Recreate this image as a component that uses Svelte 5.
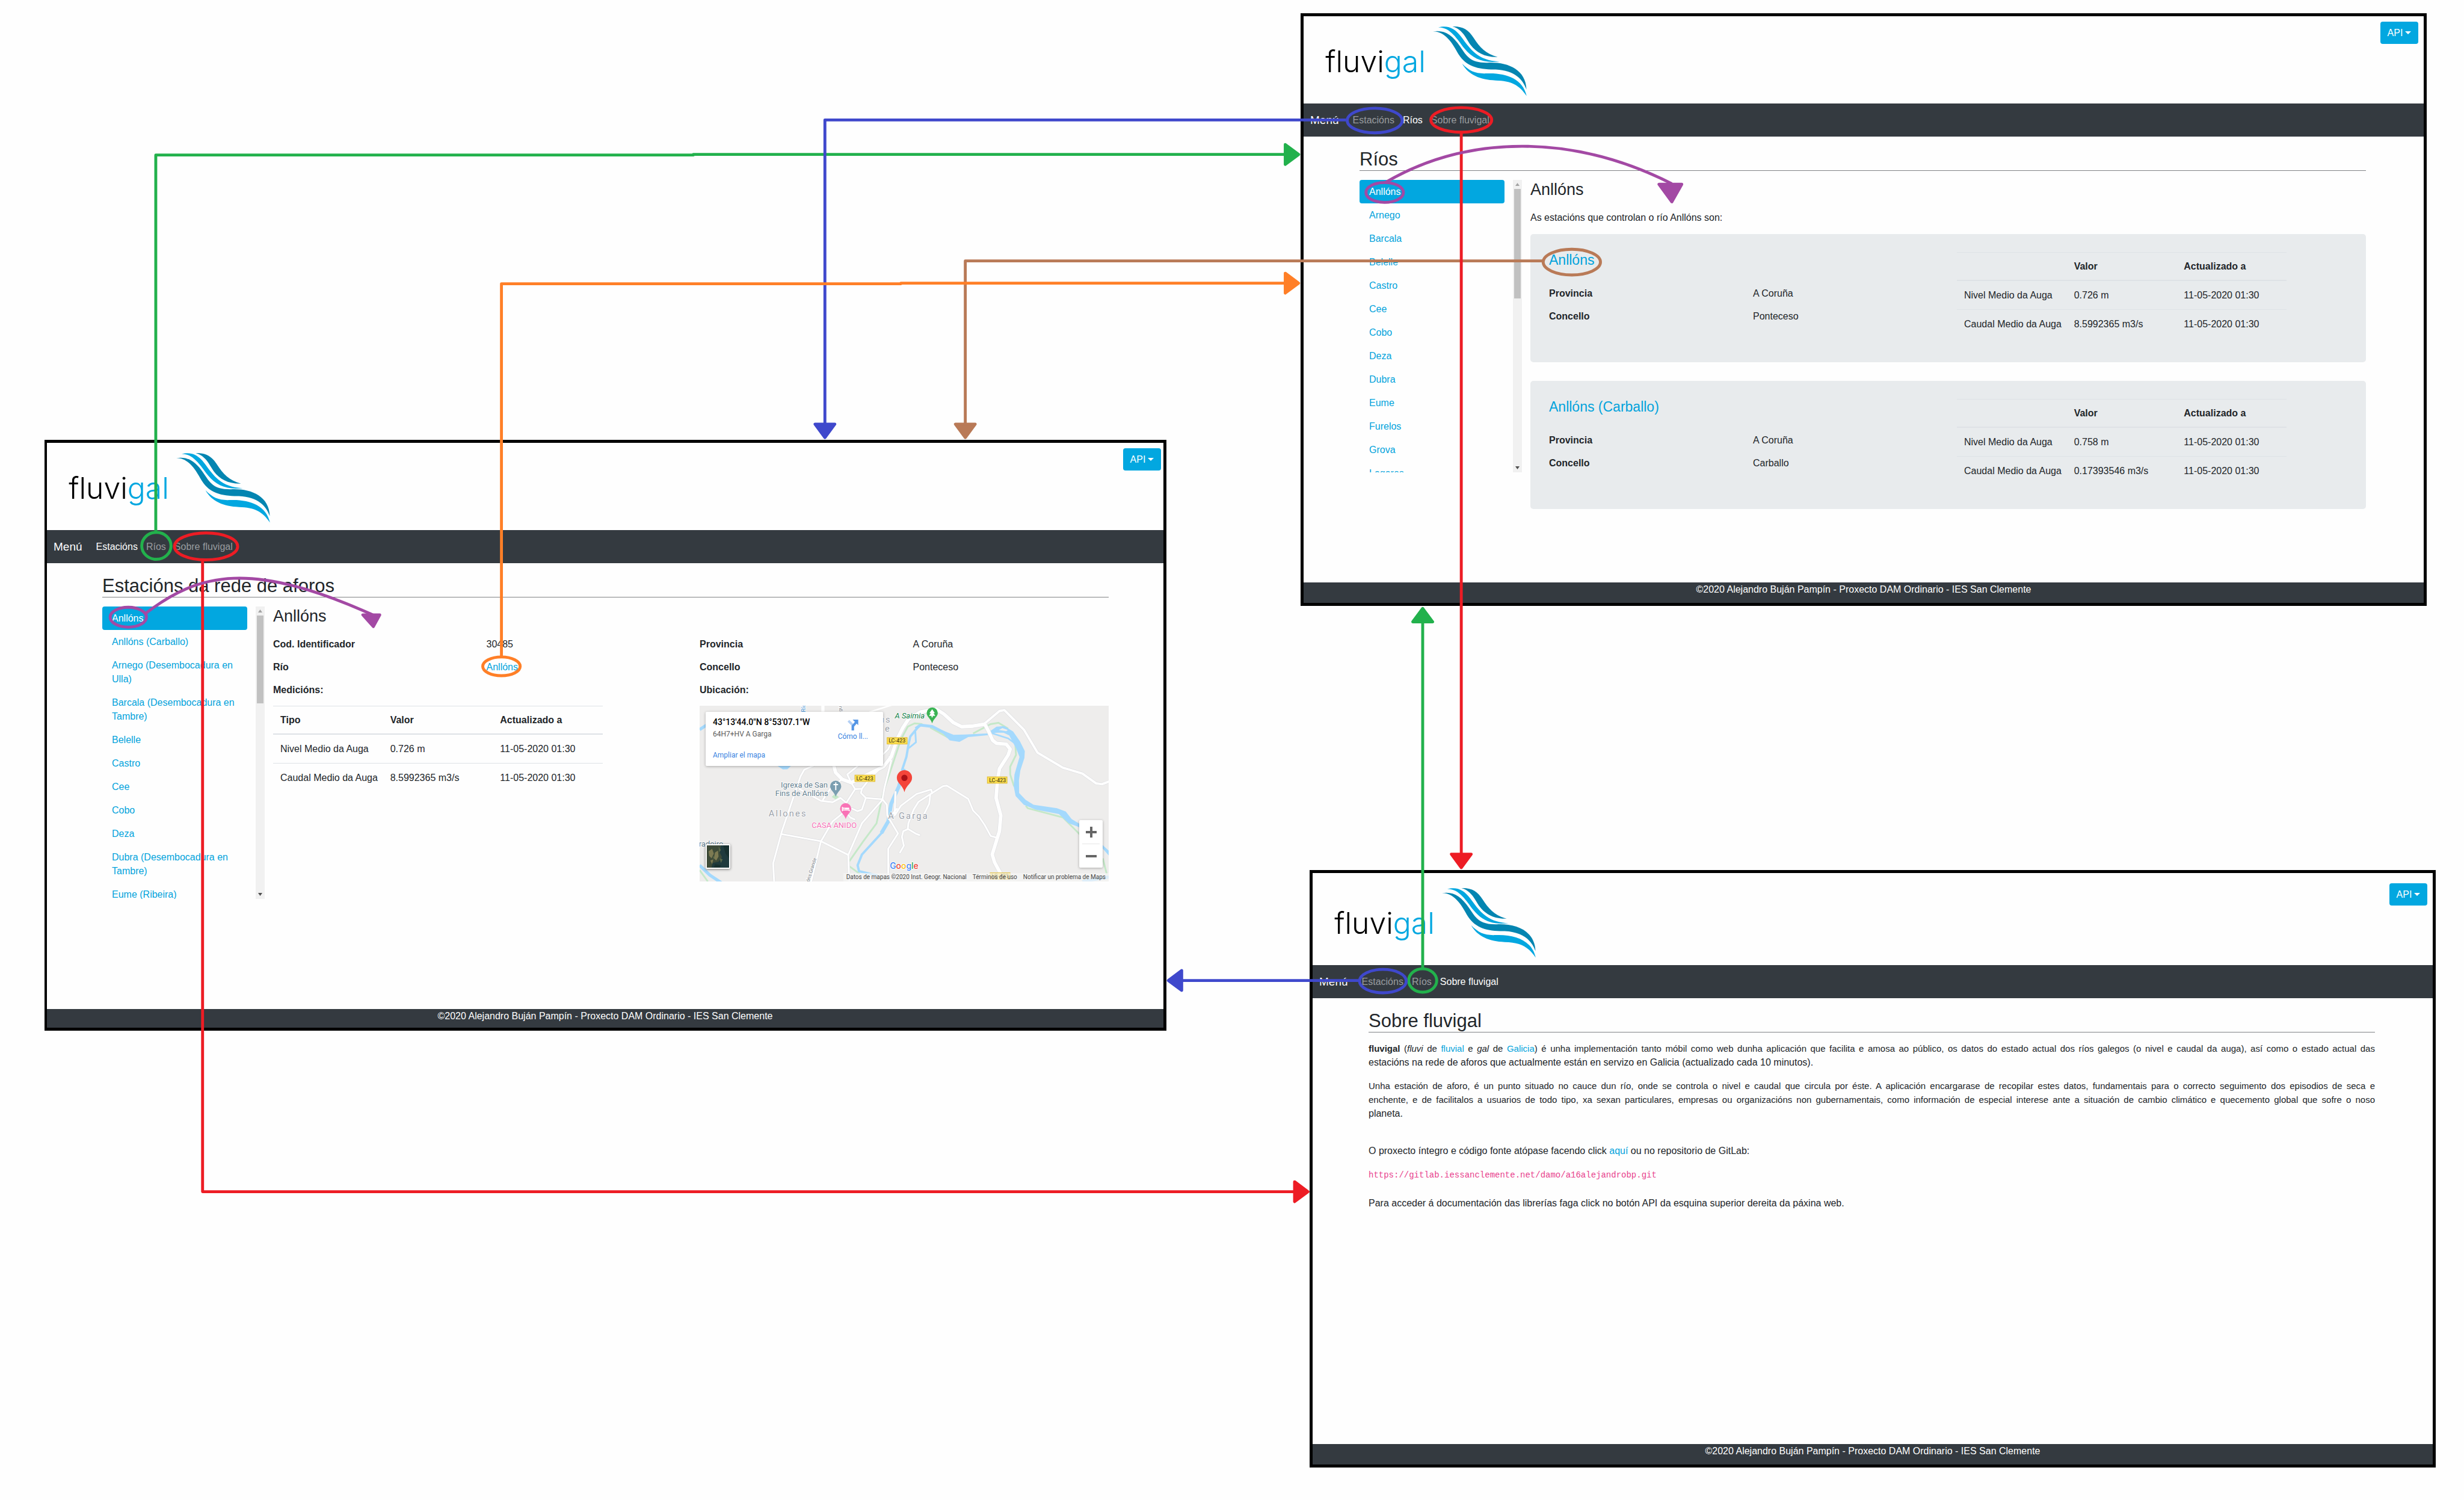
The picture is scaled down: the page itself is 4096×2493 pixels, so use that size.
<script>
  const sections = [
    { id: 'estacions', label: 'Estacións' },
    { id: 'rios', label: 'Ríos' },
    { id: 'sobre', label: 'Sobre fluvigal' }
  ];

  const stations = [
    'Anllóns', 'Anllóns (Carballo)', 'Arnego (Desembocadura en Ulla)',
    'Barcala (Desembocadura en Tambre)', 'Belelle', 'Castro', 'Cee', 'Cobo', 'Deza',
    'Dubra (Desembocadura en Tambre)', 'Eume (Ribeira)'
  ];

  const rivers = [
    'Anllóns', 'Arnego', 'Barcala', 'Belelle', 'Castro', 'Cee', 'Cobo', 'Deza',
    'Dubra', 'Eume', 'Furelos', 'Grova', 'Lagares'
  ];

  const date = '11-05-2020 01:30';

  const riverStations = [
    { name: 'Anllóns', concello: 'Ponteceso', level: '0.726 m', flow: '8.5992365 m3/s' },
    { name: 'Anllóns (Carballo)', concello: 'Carballo', level: '0.758 m', flow: '0.17393546 m3/s' }
  ];

  const minorRoads = [
    'M600 325 L555 345 L535 380 L440 660 L395 825 L400 918',
    'M435 675 L640 712 L780 782 L785 918',
    'M590 918 L640 712 L700 610 L765 558 L790 590 L812 600',
    'M780 782 L850 620 L955 500 L965 440 L1000 300 L990 280',
    'M530 445 L640 505 L700 512 L740 490 L770 515 L815 445 L795 412 L775 370 L830 325',
    'M650 500 L690 440 L740 400',
    'M815 445 L850 443 L895 385 L985 300',
    'M850 443 L845 465 L870 490 L955 497',
    'M870 490 L850 550 L828 558 L800 545',
    'M955 497 L978 525 L980 580 L1035 672 L985 750 L985 918',
    'M1022 460 L1018 580 L1050 530 L1130 470 L1205 447 L1210 465',
    'M1000 580 L1030 545',
    'M1210 465 L1265 430 L1285 427 L1395 495 L1420 555 L1450 585 L1480 630 L1510 685 L1535 692',
    'M1210 465 L1140 510 L1115 550 L1088 620 L1085 650 L1062 660 L1055 690 L1065 735 L1045 770',
    'M1085 648 L1130 675 L1145 680',
    'M1200 475 L1195 520 L1170 570',
    'M960 265 L985 240 L1000 205'
  ];
  const mainRoad =
    'M705 320 L715 360 L750 395 L795 412 L880 370 L960 330 L1000 280 L1030 190 L1060 130 L1090 85 L1150 50 L1230 35 L1270 60 L1320 105 L1360 125 L1420 122 L1480 112 L1500 150 L1520 195 L1540 210 L1590 215 L1610 240 L1600 270 L1555 340 L1545 400 L1538 490 L1562 580 L1555 660 L1518 780 L1530 820 L1560 875';
  const eastRoad =
    'M1480 108 L1555 45 L1580 40 L1680 140 L1750 258 L1880 335 L1980 365 L2050 415 L2080 420 L2120 405';

  // Arrow heads: tip position and heading in degrees (0 points down).
  const heads = [
    { x: 2225, y: 264, turn: -90, color: '#22b14c' },
    { x: 2432, y: 1035, turn: 180, color: '#22b14c' },
    { x: 1410, y: 753, turn: 0, color: '#3f48cc' },
    { x: 1992, y: 1676, turn: 90, color: '#3f48cc' },
    { x: 1650, y: 753, turn: 0, color: '#b97a57' },
    { x: 2225, y: 484, turn: -90, color: '#ff7f27' },
    { x: 2241, y: 2037, turn: -90, color: '#ed1c24' },
    { x: 2498, y: 1488, turn: 0, color: '#ed1c24' }
  ];
</script>

{#snippet topBar(active)}
  <header class="brand">
    <svg class="logo" viewBox="-81 -6 1161 444" role="img" aria-label="fluvigal">
      <text x="31" y="281">fluvi<tspan class="logo-accent">gal</tspan></text>
      <path class="deep" d="M683 46 C735 44 765 62 792 105 C822 152 855 188 915 203 C850 205 806 180 777 142 C752 108 738 62 683 46Z" />
      <path class="light" d="M610 51 C660 38 695 55 727 98 C775 162 812 222 925 226 C845 236 790 215 745 160 C707 112 672 49 610 51Z" />
      <path class="deep" d="M582 72 C640 62 680 86 722 148 C757 200 775 234 865 232 C965 228 1060 265 1063 370 C1045 318 1003 272 905 267 C815 268 755 252 715 190 C686 140 650 70 582 72Z" />
      <path class="light" d="M733 237 C772 278 805 290 862 287 C960 284 1045 315 1064 403 C1025 345 985 325 905 323 C825 320 765 295 733 237Z" />
    </svg>
    <button type="button" class="api">API<span class="caret"></span></button>
  </header>
  <nav class="navbar">
    <span class="menu">Menú</span>
    {#each sections as s}
      <a href="#{s.id}" class:active={s.id === active}>{s.label}</a>
    {/each}
  </nav>
{/snippet}

{#snippet sideList(items, thumb)}
  <div class="side">
    <ul class="list">
      {#each items as item, i}
        <li><a href="#item-{i}" class:selected={i === 0}>{item}</a></li>
      {/each}
    </ul>
    <div class="scroll" aria-hidden="true">
      <svg viewBox="0 0 15 15"><path d="M4 10 L7.500 5 L11 10Z" fill="#a3a3a3" /></svg>
      <div class="track"><div class="thumb" style="height:{thumb}%"></div></div>
      <svg viewBox="0 0 15 15"><path d="M4 5 L7.500 10 L11 5Z" fill="#505050" /></svg>
    </div>
  </div>
{/snippet}

{#snippet readings(head, level, flow)}
  <table>
    <thead>
      <tr><th scope="col">{head}</th><th scope="col">Valor</th><th scope="col">Actualizado a</th></tr>
    </thead>
    <tbody>
      <tr><td>Nivel Medio da Auga</td><td>{level}</td><td>{date}</td></tr>
      <tr><td>Caudal Medio da Auga</td><td>{flow}</td><td>{date}</td></tr>
    </tbody>
  </table>
{/snippet}

{#snippet foot()}
  <footer>©2020 Alejandro Buján Pampín - Proxecto DAM Ordinario - IES San Clemente</footer>
{/snippet}

<main class="board">
  <section class="window stations">
    {@render topBar('estacions')}
    <div class="content">
      <h1>Estacións da rede de aforos</h1>
      <div class="columns">
        {@render sideList(stations, 32)}
        <div class="detail">
          <h2>Anllóns</h2>
          <div class="halves">
            <div>
              <dl>
                <dt>Cod. Identificador</dt><dd>30485</dd>
                <dt>Río</dt><dd><a href="#rio-anllons">Anllóns</a></dd>
                <dt>Medicións:</dt><dd></dd>
              </dl>
              {@render readings('Tipo', '0.726 m', '8.5992365 m3/s')}
            </div>
            <div>
              <dl>
                <dt>Provincia</dt><dd>A Coruña</dd>
                <dt>Concello</dt><dd>Ponteceso</dd>
                <dt>Ubicación:</dt><dd></dd>
              </dl>
              <div class="map">
                <svg class="map-art" viewBox="18 18 2097 900" preserveAspectRatio="none" role="img" aria-label="Mapa de A Garga">
                  <rect x="18" y="18" width="2097" height="900" fill="#eeedec" />
                  <g fill="none" stroke="#c5e8c8" stroke-width="9">
                    <path d="M785 815 L855 715 L925 620 L960 460 L1030 250 L1050 190 L1085 125 L1120 108 L1160 112" />
                    <path d="M1420 160 L1510 112 L1550 105 L1600 135" />
                    <path d="M1200 130 L1290 180" />
                    <path d="M1635 190 L1640 270 L1610 330 L1610 370 L1630 430" />
                    <path d="M1690 530 L1700 543 L1880 590 L1980 690" />
                    <path d="M785 840 L840 880 M2085 800 L2105 880 M18 860 L60 918" />
                  </g>
                  <g fill="none" stroke="#a4d9fd" stroke-linejoin="round">
                    <path stroke-width="12" d="M930 888 L835 865 L828 835 L850 780 L905 720 L960 660" />
                    <path stroke-width="19" d="M950 670 L985 610 L1000 520 L1040 430 L1065 340" />
                    <path stroke-width="12" d="M1055 350 L1078 280 L1090 210 L1098 175 L1140 125" />
                    <path stroke-width="9" d="M1123 140 L1127 205 L1090 235" />
                    <path stroke-width="15" d="M1125 135 L1150 117 L1210 124 L1280 160" />
                    <path stroke-width="8" d="M1520 160 L1600 185 L1640 215" />
                    <path stroke-width="12" d="M1530 150 L1590 150" />
                    <path stroke-width="16" d="M18 140 L52 118 M18 835 L70 885 L130 925 M1980 918 L2115 895" />
                  </g>
                  <path fill="#a4d9fd" d="M1240 135 L1320 167 L1380 165 L1490 160 L1540 125 L1580 122 L1625 150 L1660 200 L1685 250 L1683 285 L1662 350 L1655 400 L1656 465 L1690 500 L1730 525 L1850 543 L1895 560 L1925 598 L1970 625 L2115 760 L2115 785 L2085 750 L1960 638 L1910 620 L1860 573 L1740 550 L1680 525 L1638 480 L1628 430 L1632 370 L1658 280 L1640 235 L1605 170 L1560 148 L1500 168 L1395 178 L1350 203 L1300 195 Z" />
                  <path fill="#a4d9fd" d="M412 322 L490 322 L468 343 L445 344Z" />
                  <path fill="#eeedec" d="M1552 142 L1570 132 L1598 142 L1590 148Z" />
                  <g fill="none" stroke-linejoin="round" stroke-linecap="round">
                    {#each minorRoads as d}<path {d} stroke="#dcdde0" stroke-width="13" />{/each}
                    <path d={mainRoad} stroke="#dcdde0" stroke-width="22" />
                    <path d={eastRoad} stroke="#dcdde0" stroke-width="16" />
                    <path d="M650 18 L650 60" stroke="#fff" stroke-width="16" />
                    <path d="M890 50 L1000 15" stroke="#fff" stroke-width="8" />
                    {#each minorRoads as d}<path {d} stroke="#fff" stroke-width="9" />{/each}
                    <path d={mainRoad} stroke="#fff" stroke-width="18" />
                    <path d={eastRoad} stroke="#fff" stroke-width="12" />
                  </g>
                  <g class="shields">
                    <rect x="979" y="181" width="103" height="33" /><text x="1030" y="207">LC-423</text>
                    <rect x="814" y="373" width="103" height="33" /><text x="865" y="399">LC-423</text>
                    <rect x="1493" y="382" width="101" height="33" /><text x="1545" y="408">LC-423</text>
                    <rect x="1507" y="874" width="103" height="33" /><text x="1558" y="900">LC-423</text>
                  </g>
                  <path fill="#c5e8c8" d="M695 485 L712 470 L732 485 L715 497Z" />
                  <g fill="#7b9eb0">
                    <path d="M716 484 C708 458 687 450 687 430 A28 28 0 0 1 744 430 C744 450 724 458 716 484Z" />
                    <path d="M716 410 V450 M704 422 H728" stroke="#fff" stroke-width="6" />
                  </g>
                  <g fill="#f973b6">
                    <path d="M767 598 C759 572 738 564 738 545 A28 28 0 0 1 795 545 C795 564 775 572 767 598Z" />
                    <path d="M750 536 V558 M750 552 H785 V558" stroke="#fff" stroke-width="5" fill="none" />
                    <path d="M762 540 H785 V548 H762Z" fill="#fff" /><circle cx="757" cy="543" r="4" fill="#fff" />
                  </g>
                  <g fill="#3bb454">
                    <path d="M1210 108 C1202 82 1182 74 1182 55 A28 28 0 0 1 1239 55 C1239 74 1218 82 1210 108Z" />
                    <path d="M1210 36 L1196 56 H1203 L1194 70 H1207 V77 H1213 V70 H1226 L1217 56 H1224Z" fill="#fff" />
                  </g>
                  <path fill="#f4453a" d="M1068 460 C1060 425 1029 415 1029 387 A39 39 0 0 1 1107 387 C1107 415 1076 425 1068 460Z" />
                  <circle cx="1068" cy="387" r="16" fill="#aa1116" />
                  <g class="labels">
                    <text class="end slate" x="675" y="438">Igrexa de San</text>
                    <text class="end slate" x="677" y="480">Fins de Anllóns</text>
                    <text class="pink" x="592" y="645">CASA ANIDO</text>
                    <text class="place" x="372" y="586">Allones</text>
                    <text class="place" x="984" y="598">A Garga</text>
                    <text class="place" x="953" y="104">ıs</text>
                    <text class="place" x="968" y="151">e</text>
                    <text class="end park" x="1172" y="84">A Saimia</text>
                    <text class="slate" x="14" y="738">radoiro</text>
                    <text class="road" transform="translate(580 922) rotate(-73)">óns Grande</text>
                    <text class="road" transform="translate(745 48) rotate(-90)">gu</text>
                    <text class="water" transform="translate(560 50) rotate(-90)">Río</text>
                    <text class="google" x="993" y="854"><tspan fill="#4285f4">G</tspan><tspan fill="#ea4335">o</tspan><tspan fill="#fbbc05">o</tspan><tspan fill="#4285f4">g</tspan><tspan fill="#34a853">l</tspan><tspan fill="#ea4335">e</tspan></text>
                  </g>
                </svg>
                <div class="place-card">
                  <div class="place-text">
                    <strong>43°13'44.0"N 8°53'07.1"W</strong>
                    <span>64H7+HV A Garga</span>
                    <a href="#mapa">Ampliar el mapa</a>
                  </div>
                  <a class="directions" href="#como-llegar">
                    <svg viewBox="0 0 56 56" aria-hidden="true">
                      <path d="M4 6 L28 30" stroke="#b4d0f5" stroke-width="13" />
                      <path d="M27 56 V34 L44 14" fill="none" stroke="#5596e6" stroke-width="13" />
                      <path d="M26 0 H55 V29Z" fill="#5596e6" />
                    </svg>
                    <span>Cómo ll...</span>
                  </a>
                </div>
                <button type="button" class="satellite" aria-label="Satélite">
                  <svg viewBox="0 0 38 38" aria-hidden="true">
                    <rect width="38" height="38" fill="#1f3a3d" />
                    <path d="M0 0 H24 L22 12 L26 20 L20 28 L10 30 L8 38 H0Z" fill="#3d4a38" />
                    <path d="M3 10 L9 6 L12 14 L8 22 L4 18Z M14 12 L19 9 L20 19 L16 26 L12 22Z M6 26 L11 24 L9 32Z" fill="#7c7a52" />
                    <path d="M20 2 L24 8 L21 12Z M22 22 L27 24 L24 30Z M10 18 L13 20 L11 24Z" fill="#58684a" />
                    <path d="M28 0 H38 V22 L32 14Z M14 32 L24 34 L22 38 H12Z" fill="#17302f" />
                  </svg>
                </button>
                <div class="zoom">
                  <button type="button" aria-label="Ampliar"><svg viewBox="0 0 18 18"><path d="M0 9 H18 M9 0 V18" stroke="#666" stroke-width="4" /></svg></button>
                  <button type="button" aria-label="Reducir"><svg viewBox="0 0 18 18"><path d="M0 9 H18" stroke="#666" stroke-width="4" /></svg></button>
                </div>
                <div class="credits">
                  <span>Datos de mapas ©2020 Inst. Geogr. Nacional</span>
                  <a href="#termos">Términos de uso</a>
                  <a href="#notificar">Notificar un problema de Maps</a>
                </div>
              </div>
            </div>
          </div>
        </div>
      </div>
    </div>
    {@render foot()}
  </section>

  <section class="window rivers">
    {@render topBar('rios')}
    <div class="content">
      <h1>Ríos</h1>
      <div class="columns">
        {@render sideList(rivers, 40)}
        <div class="detail">
          <h2>Anllóns</h2>
          <p class="intro">As estacións que controlan o río Anllóns son:</p>
          {#each riverStations as st}
            <article class="card halves">
              <div>
                <h3><a href="#estacion">{st.name}</a></h3>
                <dl>
                  <dt>Provincia</dt><dd>A Coruña</dd>
                  <dt>Concello</dt><dd>{st.concello}</dd>
                </dl>
              </div>
              {@render readings('', st.level, st.flow)}
            </article>
          {/each}
        </div>
      </div>
    </div>
    {@render foot()}
  </section>

  <section class="window about">
    {@render topBar('sobre')}
    <div class="content">
      <h1>Sobre fluvigal</h1>
      <div class="prose">
        <p>
          <span class="line"><b>fluvigal</b> (<i>fluvi</i> de <a href="#fluvial">fluvial</a> e <i>gal</i> de <a href="#galicia">Galicia</a>) é unha implementación tanto móbil como web dunha aplicación que facilita e amosa ao público, os datos do estado actual dos ríos galegos (o nivel e caudal da auga), así como o estado actual das</span>
          estacións na rede de aforos que actualmente están en servizo en Galicia (actualizado cada 10 minutos).
        </p>
        <p>
          <span class="line">Unha estación de aforo, é un punto situado no cauce dun río, onde se controla o nivel e caudal que circula por éste. A aplicación encargarase de recopilar estes datos, fundamentais para o correcto seguimento dos episodios de seca e</span>
          <span class="line">enchente, e de facilitalos a usuarios de todo tipo, xa sexan particulares, empresas ou organizacións non gubernamentais, como información de especial interese ante a situación de cambio climático e quecemento global que sofre o noso</span>
          planeta.
        </p>
        <p class="spaced">O proxecto íntegro e código fonte atópase facendo click <a href="#aqui">aquí</a> ou no repositorio de GitLab:</p>
        <p><code>https://gitlab.iessanclemente.net/damo/a16alejandrobp.git</code></p>
        <p class="last">Para acceder á documentación das librerías faga click no botón API da esquina superior dereita da páxina web.</p>
      </div>
    </div>
    {@render foot()}
  </section>

  <svg class="flows" viewBox="0 0 4212 2564" aria-hidden="true">
    <g stroke="#22b14c">
      <path d="M266 908 V265 H1185 V264 H2200" />
      <ellipse cx="267" cy="933" rx="25" ry="23" />
      <path d="M2432 1656 V1060" />
      <ellipse cx="2432" cy="1676" rx="24" ry="20" />
    </g>
    <g stroke="#3f48cc">
      <path d="M2301 205 H1410 V728" />
      <ellipse cx="2350" cy="206" rx="47" ry="21" />
      <path d="M2323 1676 H2018" />
      <ellipse cx="2364" cy="1677" rx="40" ry="20" />
    </g>
    <g stroke="#b97a57">
      <path d="M2638 446 H1650 V728" />
      <ellipse cx="2687" cy="448" rx="49" ry="22" />
    </g>
    <g stroke="#ff7f27">
      <path d="M857 1122 V485 H1540 V484 H2200" />
      <ellipse cx="857" cy="1139" rx="32" ry="16" />
    </g>
    <g stroke="#ed1c24">
      <path d="M346 958 V2037 H2215" />
      <ellipse cx="352" cy="934" rx="54" ry="23" />
      <path d="M2498 227 V1462" />
      <ellipse cx="2498" cy="205" rx="52" ry="21" />
    </g>
    <g stroke="#a349a4">
      <path d="M248 1049 C340 978 430 958 637 1051" />
      <ellipse cx="219" cy="1055" rx="31" ry="17" />
      <path d="M2368 312 C2510 229 2690 229 2858 314" />
      <ellipse cx="2367" cy="329" rx="32" ry="17" />
      <path fill="#a349a4" d="M620 1051 L649 1051 L638 1071Z M2836 315 L2875 315 L2858 345Z" />
    </g>
    {#each heads as h}
      <path d="M-17 -28 H17 L0 -5Z" fill={h.color} stroke={h.color} transform="translate({h.x} {h.y}) rotate({h.turn})" />
    {/each}
  </svg>
</main>

<style>
  :global(body) {
    background: #fff;
  }
  .board {
    position: relative;
    width: 100%;
    aspect-ratio: 4096 / 2493;
    overflow: hidden;
    font: 16px/23px 'Liberation Sans', Arial, sans-serif;
    color: #212529;
    background: #fefefe;
  }
  .board *,
  .board {
    box-sizing: border-box;
  }
  .window {
    position: absolute;
    display: flex;
    flex-direction: column;
    border: 5px solid #000;
    background: #fefefe;
  }
  .stations {
    left: calc(74 / 4096 * 100%);
    top: calc(731 / 2493 * 100%);
    width: calc(1865 / 4096 * 100%);
    min-height: calc(982 / 2493 * 100%);
    border-left-width: 4px;
  }
  .rivers {
    left: calc(2162 / 4096 * 100%);
    top: calc(22 / 2493 * 100%);
    width: calc(1872 / 4096 * 100%);
    min-height: calc(985 / 2493 * 100%);
  }
  .about {
    left: calc(2177 / 4096 * 100%);
    top: calc(1446 / 2493 * 100%);
    width: calc(1872 / 4096 * 100%);
    min-height: calc(993 / 2493 * 100%);
  }
  .flows {
    position: absolute;
    inset: 0;
    width: 100%;
    height: 100%;
    fill: none;
    stroke-width: 5;
    stroke-linejoin: round;
    pointer-events: none;
  }

  a {
    color: #02a3dc;
    text-decoration: none;
  }
  h1, h2, h3, p, ul, dl, dd {
    margin: 0;
    padding: 0;
    font-weight: 400;
  }
  button {
    border: 0;
    padding: 0;
    font: inherit;
    cursor: pointer;
  }

  .brand {
    display: flex;
    justify-content: space-between;
    align-items: flex-start;
    height: 145px;
    padding-right: 9px;
  }
  .stations .brand {
    padding-right: 4px;
  }
  .about .brand {
    height: 153px;
    padding-top: 8px;
  }
  .logo {
    width: 376px;
    height: 144px;
  }
  .logo text {
    font: 300 154px Inter, 'Open Sans', sans-serif;
    fill: #000;
  }
  .logo .logo-accent,
  .logo .light {
    fill: #02a7e0;
  }
  .logo .deep {
    fill: #0385b1;
  }
  .api {
    display: flex;
    align-items: center;
    justify-content: center;
    gap: 4px;
    width: 63px;
    height: 37px;
    margin-top: 9px;
    border-radius: 4px;
    background: #02a7e0;
    color: #fff;
  }
  .caret {
    border: 5px solid transparent;
    border-top-color: #fff;
    border-bottom: 0;
  }
  .navbar {
    display: flex;
    align-items: center;
    gap: 14px;
    height: 55px;
    padding: 0 11px;
    background: #343a40;
  }
  .navbar .menu {
    margin-right: 9px;
    font-size: 19px;
    color: #fff;
  }
  .navbar a {
    color: #999c9f;
  }
  .navbar a.active {
    color: #fff;
  }
  footer {
    flex: 0 0 34px;
    background: #343a40;
    color: #fff;
    text-align: center;
  }
  .stations footer {
    flex-basis: 31px;
  }

  .content {
    flex: 1;
    max-width: 1766px;
    padding: 19px 0 0 93px;
  }
  .stations .content {
    max-width: 1765px;
    padding-left: 92px;
  }
  h1 {
    border-bottom: 1px solid #808285;
    font-size: 31px;
    line-height: 37px;
  }
  h2 {
    font-size: 27px;
    line-height: 33px;
  }
  h3 {
    font-size: 23px;
    line-height: 28px;
  }
  .columns {
    display: flex;
    gap: 14px;
    margin-top: 15px;
  }
  .side {
    display: flex;
    gap: 14px;
    flex: 0 0 270px;
    height: 486px;
  }
  .list {
    flex: 1;
    list-style: none;
    overflow: hidden;
  }
  .list a {
    display: block;
    padding: 8px 15px 8px 16px;
    border-radius: 4px;
  }
  .list .selected {
    background: #02a7e0;
    color: #fff;
  }
  .scroll {
    display: flex;
    flex-direction: column;
    width: 15px;
    background: #f1f1f1;
  }
  .scroll svg {
    height: 15px;
  }
  .track {
    flex: 1;
    padding: 0 2px;
  }
  .thumb {
    background: #c1c1c1;
  }
  .detail {
    flex: 1;
    min-width: 0;
  }
  .halves {
    display: grid;
    grid-template-columns: 1fr 1fr;
    gap: 29px;
  }
  .detail > .halves:not(.card) {
    margin-top: 18px;
  }
  dl {
    display: grid;
    grid-template-columns: 1fr 1fr;
    gap: 15px 29px;
  }
  dt {
    font-weight: 700;
  }
  table {
    width: 100%;
    max-width: 548px;
    border-collapse: collapse;
    table-layout: fixed;
  }
  .stations table,
  .map {
    margin-top: 15px;
  }
  th,
  td {
    padding: 12px 0 12px 12px;
    border-top: 1px solid #dee2e6;
    text-align: left;
    white-space: nowrap;
  }
  th {
    padding-top: 11px;
    padding-bottom: 11px;
    border-bottom: 2px solid #dee2e6;
  }

  .intro {
    margin-top: 18px;
  }
  .card {
    min-height: 213px;
    margin-bottom: 31px;
    padding: 30px 31px;
    border-radius: 5px;
    background: #e8ebed;
  }
  .intro + .card {
    margin-top: 16px;
  }
  .card h3 {
    line-height: 26px;
  }
  .card dl {
    margin-top: 31px;
  }
  .card table {
    align-self: start;
  }

  .prose {
    padding-top: 15px;
  }
  .prose p {
    margin-bottom: 16px;
  }
  .prose .line {
    display: block;
    text-align: justify;
    text-align-last: justify;
    font-size: 15px;
  }
  .prose .spaced {
    margin-top: 39px;
  }
  .prose .last {
    margin-top: 23px;
  }
  code {
    font: 14px/23px 'Liberation Mono', monospace;
    color: #e83e8c;
  }

  .map {
    position: relative;
    aspect-ratio: 680 / 292;
    overflow: hidden;
    font-family: Roboto, sans-serif;
  }
  .map-art {
    display: block;
    width: 100%;
    height: 100%;
  }
  .labels text {
    font: 40px Roboto, sans-serif;
    paint-order: stroke;
    stroke: #fff;
    stroke-width: 5px;
  }
  .labels .end {
    text-anchor: end;
  }
  .labels .slate {
    fill: #64808f;
  }
  .labels .pink {
    fill: #f46fb4;
  }
  .labels .park {
    fill: #118149;
    font-style: italic;
  }
  .labels .place {
    fill: #9ba1a9;
    font-size: 45px;
    letter-spacing: 7px;
  }
  .labels .road {
    fill: #757b82;
    font-size: 25px;
  }
  .labels .water {
    fill: #3c8ed0;
    font-size: 30px;
  }
  .labels .google {
    font: 500 43px Inter, sans-serif;
  }
  .shields rect {
    fill: #fde050;
    stroke: #dcb72f;
    stroke-width: 3;
  }
  .shields text {
    font: 500 27px Roboto, sans-serif;
    text-anchor: middle;
    fill: #5a4d18;
  }
  .place-card {
    position: absolute;
    left: 10px;
    top: 10px;
    display: flex;
    justify-content: space-between;
    width: 295px;
    height: 90px;
    padding: 7px 25px 8px 12px;
    border-radius: 2px;
    background: #fff;
    box-shadow: 0 1px 4px #0000004d;
    font-size: 12px;
    line-height: 20px;
  }
  .place-text {
    display: flex;
    flex-direction: column;
    color: #5b5b5b;
  }
  .place-text strong {
    font-size: 14px;
    font-weight: 500;
    color: #000;
  }
  .place-card a {
    color: #3a84df;
  }
  .place-text a {
    margin-top: 15px;
  }
  .directions {
    display: flex;
    flex-direction: column;
    align-items: center;
    padding-top: 6px;
  }
  .directions svg {
    width: 18px;
    height: 18px;
  }
  .satellite {
    position: absolute;
    left: 10px;
    bottom: 21px;
    width: 41px;
    height: 41px;
    border: 2px solid #fff;
    border-radius: 2px;
    box-shadow: 0 1px 4px #00000080;
  }
  .satellite svg {
    display: block;
    width: 100%;
    height: 100%;
  }
  .zoom {
    position: absolute;
    right: 10px;
    bottom: 23px;
    display: flex;
    flex-direction: column;
    width: 39px;
    padding: 0 5px;
    border-radius: 2px;
    background: #fff;
    box-shadow: 0 1px 4px #0000004d;
  }
  .zoom button {
    display: flex;
    align-items: center;
    justify-content: center;
    height: 39px;
    background: none;
  }
  .zoom button + button {
    height: 40px;
    border-top: 1px solid #e6e6e6;
  }
  .zoom svg {
    width: 18px;
    height: 18px;
  }
  .credits {
    position: absolute;
    right: 0;
    bottom: 0;
    display: flex;
    gap: 10px;
    padding: 0 5px;
    background: #f5f5f5b3;
    font-size: 10px;
    line-height: 14px;
  }
  .credits,
  .credits a {
    color: #444;
  }
</style>
